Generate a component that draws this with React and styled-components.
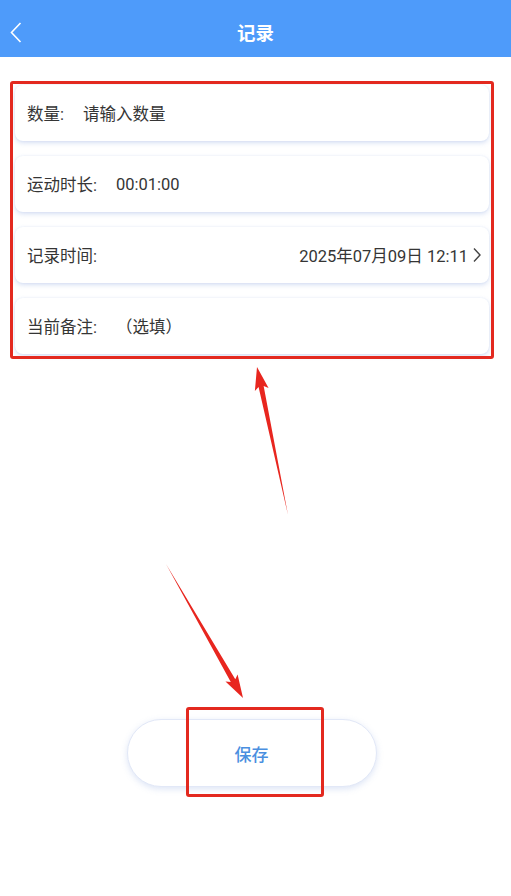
import styled, { createGlobalStyle } from "styled-components";

const GlobalStyle = createGlobalStyle`
  body {
    margin: 0;
    background: #ffffff;
    font-family: Roboto, "Noto Sans CJK SC", sans-serif;
  }
`;

const fields = [
  { label: "数量:", value: "请输入数量" },
  { label: "运动时长:", value: "00:01:00" },
  { label: "记录时间:", value: "2025年07月09日 12:11", arrow: true },
  { label: "当前备注:", value: "（选填）" },
];

// tapered annotation arrow, tail -> tip
const arrowPoints = (tx, ty, hx, hy, headLen, headW, shaftW) => {
  const dx = hx - tx;
  const dy = hy - ty;
  const len = Math.sqrt(dx * dx + dy * dy);
  const ux = dx / len;
  const uy = dy / len;
  const nx = -uy;
  const ny = ux;
  const bx = hx - ux * headLen;
  const by = hy - uy * headLen;
  const pts = [
    [tx, ty],
    [bx + nx * shaftW, by + ny * shaftW],
    [bx + nx * headW - ux * 3, by + ny * headW - uy * 3],
    [hx, hy],
    [bx - nx * headW - ux * 3, by - ny * headW - uy * 3],
    [bx - nx * shaftW, by - ny * shaftW],
  ];
  return pts.map((p) => p.join(",")).join(" ");
};

const App = () => {
  return (
    <Page>
      <GlobalStyle />
      <Header>
        <BackButton>
          <svg width="12" height="21" viewBox="0 0 12 21">
            <polyline
              points="10.5,1 1.5,10.5 10.5,20"
              fill="none"
              stroke="#ffffff"
              strokeWidth="1.6"
            />
          </svg>
        </BackButton>
        <Title>记录</Title>
      </Header>

      <FormList>
        {fields.map((f) => (
          <Card key={f.label}>
            <Label>{f.label}</Label>
            <Value $right={f.arrow}>{f.value}</Value>
            {f.arrow && (
              <svg width="10" height="16" viewBox="0 0 10 16">
                <polyline
                  points="2,1.5 8,8 2,14.5"
                  fill="none"
                  stroke="#444444"
                  strokeWidth="1.4"
                />
              </svg>
            )}
          </Card>
        ))}
      </FormList>

      <SaveRow>
        <SaveButton type="button">保存</SaveButton>
      </SaveRow>

      <Highlight $x={10} $y={81} $w={484} $h={278} />
      <Highlight $x={186} $y={707} $w={138} $h={90} />
      <ArrowLayer width="511" height="896" viewBox="0 0 511 896">
        <polygon points={arrowPoints(288, 515, 257, 367, 20, 7, 2.6)} fill="#e8261f" />
        <polygon points={arrowPoints(166, 564, 243, 698, 20, 7, 2.6)} fill="#e8261f" />
      </ArrowLayer>
    </Page>
  );
};

const Page = styled.div`
  position: relative;
  width: 511px;
  height: 896px;
  overflow: hidden;
  background: #ffffff;
`;

const Header = styled.div`
  display: flex;
  align-items: center;
  justify-content: center;
  position: relative;
  height: 57px;
  background: #4e9bfa;
`;

const BackButton = styled.div`
  position: absolute;
  left: 10px;
  top: 22px;
  display: flex;
`;

const Title = styled.div`
  color: #ffffff;
  font-family: "Noto Sans CJK SC", sans-serif;
  font-size: 18.5px;
  font-weight: 700;
  margin-top: 6px;
`;

const FormList = styled.div`
  display: flex;
  flex-direction: column;
  gap: 15px;
  margin: 28px 22px 0 15px;
`;

const Card = styled.div`
  display: flex;
  align-items: center;
  height: 56px;
  padding: 0 7px 0 12px;
  background: #ffffff;
  border-radius: 8px;
  box-shadow: 0 2px 5px rgba(110, 145, 215, 0.28), 0 0 2px rgba(110, 145, 215, 0.12);
  color: #353535;
  font-size: 16.5px;
`;

const Label = styled.span`
  white-space: nowrap;
`;

const Value = styled.span`
  margin-left: ${(p) => (p.$right ? "auto" : "19px")};
  margin-right: ${(p) => (p.$right ? "4px" : "0")};
  white-space: nowrap;
`;

const SaveRow = styled.div`
  display: flex;
  justify-content: center;
  margin-top: 365px;
  padding-right: 8px;
`;

const SaveButton = styled.button`
  width: 250px;
  height: 68px;
  border-radius: 34px;
  border: 1.5px solid #e2e8f7;
  background: #ffffff;
  box-shadow: 0 2px 6px rgba(120, 150, 220, 0.25);
  color: #4a8fe0;
  font-family: "Noto Sans CJK SC", sans-serif;
  font-size: 17px;
  font-weight: 500;
`;

const Highlight = styled.div`
  position: absolute;
  left: ${(p) => p.$x}px;
  top: ${(p) => p.$y}px;
  width: ${(p) => p.$w}px;
  height: ${(p) => p.$h}px;
  box-sizing: border-box;
  border: 3px solid #e3291f;
  border-radius: 3px;
  pointer-events: none;
`;

const ArrowLayer = styled.svg`
  position: absolute;
  left: 0;
  top: 0;
  pointer-events: none;
`;

export default App;
